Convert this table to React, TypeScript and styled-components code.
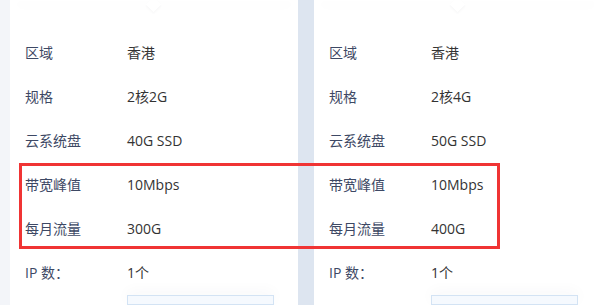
import React from "react";
import styled, { createGlobalStyle } from "styled-components";

const GlobalStyle = createGlobalStyle`
  html, body {
    margin: 0;
    padding: 0;
    background: #f3f5f9;
    overflow: hidden;
  }
  body {
    font-family: "Open Sans", "Noto Sans CJK SC", sans-serif;
  }
`;

const Page = styled.div`
  position: relative;
  display: flex;
  align-items: flex-start;
  width: 594px;
  height: 305px;
  padding-left: 10px;
  box-sizing: border-box;
  overflow: hidden;
`;

const Card = styled.div`
  flex: 0 0 288px;
  width: 288px;
  height: 305px;
  background: #ffffff;
  overflow: hidden;
  display: flex;
  flex-direction: column;
`;

const Divider = styled.div`
  flex: 0 0 16px;
  height: 305px;
  background: #dde5f0;
`;

const TopBar = styled.div`
  position: relative;
  height: 5px;
  background: #ffffff;
  box-shadow: 0 4px 16px rgba(40, 55, 80, 0.09);
  z-index: 1;

  &::after {
    content: "";
    position: absolute;
    left: 50%;
    top: -1px;
    width: 11px;
    height: 11px;
    margin-left: -6px;
    background: #ffffff;
    transform: rotate(45deg);
    box-shadow: 1px 1px 2px rgba(40, 55, 80, 0.04);
  }
`;

const Rows = styled.div`
  display: flex;
  flex-direction: column;
  padding: 29px 0 0 15px;
`;

const Row = styled.div`
  display: flex;
  align-items: center;
  height: 44px;
  font-size: 14px;
`;

const Label = styled.span`
  width: 102px;
  color: #3d4864;
`;

const Value = styled.span`
  color: #333333;
`;

const BuyButton = styled.div`
  margin: 1px 0 0 117px;
  width: 147px;
  height: 32px;
  box-sizing: border-box;
  border: 1px solid #d3e3f4;
  background: #f5f9fe;
  box-shadow: 0 -4px 14px rgba(40, 55, 80, 0.035);
`;

const Highlight = styled.div`
  position: absolute;
  left: 19px;
  top: 163px;
  width: 481px;
  height: 86px;
  box-sizing: border-box;
  border: 3px solid #f03434;
  pointer-events: none;
`;

type Plan = { spec: string; disk: string; traffic: string };

const plans: Plan[] = [
  { spec: "2核2G", disk: "40G SSD", traffic: "300G" },
  { spec: "2核4G", disk: "50G SSD", traffic: "400G" },
];

const PlanCard: React.FC<{ plan: Plan }> = ({ plan }) => {
  const items: [string, string][] = [
    ["区域", "香港"],
    ["规格", plan.spec],
    ["云系统盘", plan.disk],
    ["带宽峰值", "10Mbps"],
    ["每月流量", plan.traffic],
    ["IP 数：", "1个"],
  ];
  return (
    <Card>
      <TopBar />
      <Rows>
        {items.map(([k, v]) => (
          <Row key={k}>
            <Label>{k}</Label>
            <Value>{v}</Value>
          </Row>
        ))}
      </Rows>
      <BuyButton />
    </Card>
  );
};

export default function App() {
  return (
    <>
      <GlobalStyle />
      <Page>
        <PlanCard plan={plans[0]} />
        <Divider />
        <PlanCard plan={plans[1]} />
        <Highlight />
      </Page>
    </>
  );
}
